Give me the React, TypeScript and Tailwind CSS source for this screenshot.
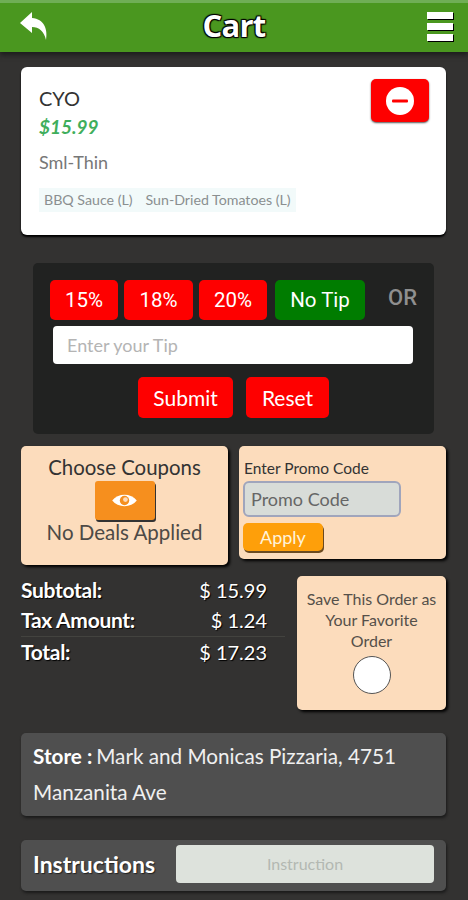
import React from "react";

function TipButton({ label, width, green }: { label: string; width: string; green?: boolean }) {
  return (
    <div
      className={`${width} h-[40px] rounded-[5px] flex items-center justify-center text-white text-[20.5px] font-['Roboto',sans-serif] ${green ? "bg-[#007c00]" : "bg-[#fe0000]"}`}
    >
      {label}
    </div>
  );
}

function TotalRow({ label, value }: { label: string; value: string }) {
  return (
    <div className="flex justify-between pr-[18px] items-center h-[30px] text-white text-[20px] [text-shadow:1px_1px_1px_#000]">
      <span className="font-bold text-[21px] tracking-[-0.3px]">{label}</span>
      <span>{value}</span>
    </div>
  );
}

export default function App() {
  return (
    <div className="w-[468px] h-[900px] overflow-hidden bg-[#333231] font-['Lato',sans-serif]">
      <header className="h-[52px] bg-[#4a971f] border-t-[3px] border-[#6fae55] flex items-center justify-between pl-[19px] pr-[15px] shadow-[0_3px_5px_#1c1c1c]">
        <svg width="30" height="30" viewBox="0 0 30 30" className="mb-[3px]">
          <path d="M13 1 L1 12 L13 22 L13 16 C20 16 25 20 27 29 C29 18 25 8 13 7 Z" fill="#fff" />
        </svg>
        <h1 className="text-white text-[31px] font-bold font-['Open_Sans',sans-serif] leading-none tracking-[-0.8px] mb-[4px] ml-[-8px] [text-shadow:1px_1px_1px_#000,-1px_-1px_1px_#000,1px_-1px_1px_#000,-1px_1px_1px_#000]">
          Cart
        </h1>
        <div className="flex flex-col gap-[4px] w-[26px] mb-[3px]">
          <div className="h-[7px] bg-white shadow-[1px_1px_0_#000]" />
          <div className="h-[7px] bg-white shadow-[1px_1px_0_#000]" />
          <div className="h-[7px] bg-white shadow-[1px_1px_0_#000]" />
        </div>
      </header>

      <main className="px-[21px] pr-[22px] pt-[15px]">
        <section className="h-[168px] bg-white rounded-[6px] shadow-[0_2px_2px_#000] pl-[18px] pr-[17px] pt-[11px] flex justify-between">
          <div>
            <div className="text-[20px] leading-[40px] h-[37px] text-[#333]">CYO</div>
            <div className="text-[19px] leading-[24px] font-bold italic text-[#3fae5c]">$15.99</div>
            <div className="text-[18px] text-[#777] mt-[11px] leading-[24px]">Sml-Thin</div>
            <div className="flex mt-[14px] text-[14.2px] text-[#8a8f90] bg-[#f2fafa] h-[24px] items-center px-[5px] gap-[13px] w-fit">
              <span>BBQ Sauce (L)</span>
              <span>Sun-Dried Tomatoes (L)</span>
            </div>
          </div>
          <div className="w-[58px] h-[43px] mt-[1px] bg-[#fe0000] rounded-[5px] shadow-[0_1px_2px_#555] flex items-center justify-center">
            <svg width="28" height="28" viewBox="0 0 28 28">
              <circle cx="14" cy="14" r="14" fill="#fff" />
              <rect x="6" y="12.5" width="16" height="3" rx="1" fill="#f00" />
            </svg>
          </div>
        </section>

        <section className="mt-[28px] mx-[12px] h-[171px] w-[401px] bg-[#212221] rounded-[5px] pt-[17px] pl-[17px]">
          <div className="flex items-center">
            <TipButton label="15%" width="w-[68px]" />
            <div className="w-[6px]" />
            <TipButton label="18%" width="w-[69px]" />
            <div className="w-[6px]" />
            <TipButton label="20%" width="w-[68px]" />
            <div className="w-[8px]" />
            <TipButton label="No Tip" width="w-[90px]" green />
            <span className="ml-[23px] text-[22px] font-medium text-[#8f8f8f] font-['Roboto',sans-serif] mb-[5px]">OR</span>
          </div>
          <div className="ml-[3px] mt-[6px] w-[360px] h-[38px] bg-white rounded-[4px] flex items-center pl-[14px] text-[18px] text-[#b4b4b4]">
            Enter your Tip
          </div>
          <div className="flex ml-[88px] mt-[13px] gap-[13px] text-white text-[21px]">
            <div className="w-[95px] h-[41px] bg-[#fe0000] rounded-[5px] flex items-center justify-center">Submit</div>
            <div className="w-[83px] h-[41px] bg-[#fe0000] rounded-[5px] flex items-center justify-center">Reset</div>
          </div>
        </section>

        <section className="mt-[12px] flex gap-[11px] items-start">
          <div className="w-[207px] h-[119px] bg-[#fcdcbc] rounded-[5px] shadow-[2px_2px_3px_#000] flex flex-col items-center pt-[8px]">
            <div className="text-[20.4px] leading-[26px] text-[#333]">Choose Coupons</div>
            <div className="w-[60px] h-[39px] mt-[1px] bg-[#f68f1e] rounded-[3px] shadow-[1px_2px_0_#333] flex items-center justify-center">
              <svg width="27" height="17" viewBox="0 0 28 18">
                <path d="M1 9 C7 1 21 1 27 9 C21 17 7 17 1 9 Z" fill="#fff" />
                <circle cx="14" cy="9" r="5" fill="#f68f1e" />
                <circle cx="15" cy="8" r="2.5" fill="#fcdcbc" />
              </svg>
            </div>
            <div className="text-[20.5px] leading-[26px] text-[#4d4a46] mt-[-1px]">No Deals Applied</div>
          </div>
          <div className="w-[207px] h-[113px] bg-[#fcdcbc] rounded-[5px] shadow-[2px_2px_3px_#000] pl-[4px] pt-[12px]">
            <div className="text-[15.5px] leading-[20px] text-[#333] ml-[1px]">Enter Promo Code</div>
            <div className="mt-[3px] w-[158px] h-[36px] bg-[#d8dcd8] border-2 border-[#a0a5bc] rounded-[6px] pl-[6px] flex items-center text-[18px] text-[#666]">
              Promo Code
            </div>
            <div className="mt-[6px] w-[80px] h-[28px] bg-[#fe9f0a] rounded-[5px] shadow-[1px_2px_0_#6b4a20] pl-[17px] flex items-center text-[18px] text-[#fff3dc]">
              Apply
            </div>
          </div>
        </section>

        <section className="mt-[11px] flex gap-[12px] items-start">
          <div className="w-[264px] mt-[-1px]">
            <TotalRow label="Subtotal:" value="$ 15.99" />
            <TotalRow label="Tax Amount:" value="$ 1.24" />
            <div className="h-px bg-[#43433f] mt-[1px]" />
            <TotalRow label="Total:" value="$ 17.23" />
          </div>
          <div className="w-[149px] h-[134px] bg-[#fcdcbc] rounded-[5px] shadow-[2px_2px_3px_#000] flex flex-col items-center pt-[12px] text-[16px] leading-[21px] text-[#55504a] text-center">
            <div>Save This Order as</div>
            <div>Your Favorite</div>
            <div>Order</div>
            <div className="mt-[5px] w-[38px] h-[38px] rounded-full bg-white border border-[#555]" />
          </div>
        </section>

        <section className="mt-[23px] h-[83px] bg-[#4f4f4f] rounded-[5px] shadow-[1px_2px_3px_#1a1a1a] pl-[12px] pr-[20px] pt-[5px] text-white text-[20.7px] leading-[36px]">
          <div className="flex gap-[4px] whitespace-nowrap">
            <span className="font-bold">Store :</span>
            <span className="text-[#f0f0f0]">Mark and Monicas Pizzaria, 4751</span>
          </div>
          <div className="text-[#f0f0f0]">Manzanita Ave</div>
        </section>

        <section className="mt-[24px] h-[51px] bg-[#4f4f4f] rounded-[5px] shadow-[1px_2px_3px_#1a1a1a] pl-[12px] pr-[12px] pb-[3px] flex items-center justify-between">
          <span className="text-white text-[23px] font-bold [text-shadow:1px_1px_1px_#222]">Instructions</span>
          <div className="w-[258px] h-[38px] bg-[#dde2dc] rounded-[4px] flex items-center justify-center text-[16px] text-[#b3b8b2]">
            Instruction
          </div>
        </section>
      </main>
    </div>
  );
}
